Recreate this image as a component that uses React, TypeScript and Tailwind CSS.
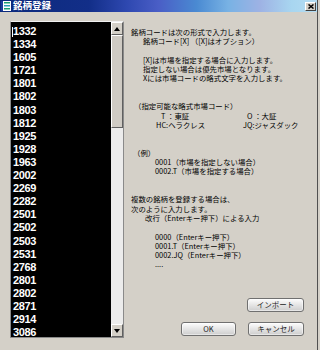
import React from "react";

const items = [
  "1332", "1334", "1605", "1721", "1801", "1802", "1803", "1812", "1925", "1928", "1963", "2002",
  "2269", "2282", "2501", "2502", "2503", "2531", "2768", "2801", "2802", "2871", "2914", "3086",
];

function Line({ children, pl = "" }: { children?: React.ReactNode; pl?: string }) {
  return <div className={`h-[9.3px] whitespace-nowrap ${pl}`}>{children}</div>;
}

function Btn({ label, w }: { label: string; w: string }) {
  return (
    <div
      className={`${w} h-[14px] rounded-[3px] border border-[#707070] bg-linear-to-b from-[#fdfdfd] to-[#cdcdcd] flex items-center justify-center text-[7.5px] text-[#222] shadow-[inset_0_0_0_1px_#ffffff80]`}
    >
      {label}
    </div>
  );
}

function ScrollBtn({ up }: { up: boolean }) {
  return (
    <div className="h-[13px] w-full bg-[#d4d0c8] border-t border-l border-t-white border-l-white border-b border-r border-b-[#606060] border-r-[#606060] flex items-center justify-center">
      <svg width="6" height="4" viewBox="0 0 6 4">
        {up ? <polygon points="3,0 6,4 0,4" fill="#000" /> : <polygon points="0,0 6,0 3,4" fill="#000" />}
      </svg>
    </div>
  );
}

export default function App() {
  return (
    <div className="w-[320px] h-[350px] bg-[#d4d0c8] flex overflow-hidden font-['Noto_Sans_CJK_JP',sans-serif]">
      <div className="w-[318px] h-full flex flex-col border-r border-[#505050]">
        {/* title bar */}
        <div className="h-[12px] flex items-center bg-[linear-gradient(90deg,#0c2a7c_0%,#122e88_28%,#2e48b0_40%,#4a5ec6_50%,#4a8ad2_62%,#78b2e4_72%,#9eb2e4_82%,#a8d6f0_92%,#b4dcf2_100%)]">
          <svg width="10" height="10" viewBox="0 0 10 10" className="ml-[1px]">
            <rect x="0" y="0" width="10" height="10" fill="#ffffff" />
            <rect x="0" y="0" width="2" height="10" fill="#1a3c9a" />
            <rect x="3" y="1" width="6" height="1.5" fill="#1aa070" />
            <rect x="3" y="4" width="6" height="1.5" fill="#2aa0b8" />
            <rect x="3" y="7" width="6" height="1.5" fill="#1aa070" />
          </svg>
          <span className="ml-[2px] text-[9.5px] leading-none font-bold text-white tracking-[0px]">銘柄登録</span>
          <div className="ml-auto mr-[1px] w-[11px] h-[9px] bg-[#d4d0c8] border-t border-l border-t-white border-l-white border-b border-r border-b-[#404040] border-r-[#404040] flex items-center justify-center">
            <svg width="6" height="5" viewBox="0 0 6 5">
              <path d="M0.5 0.5 L5.5 4.5 M5.5 0.5 L0.5 4.5" stroke="#000" strokeWidth="1.5" />
            </svg>
          </div>
        </div>

        {/* body */}
        <div className="flex flex-1">
          {/* list */}
          <div className="ml-[10px] mt-[9px] w-[114px] h-[317px] border border-[#8a8a8a] border-t-[#f0f0f0] flex">
            <div className="flex-1 bg-black pt-[3px] pl-[1px] font-['Liberation_Sans',sans-serif] text-white font-bold text-[11px] leading-[13.1px] tracking-[-0.4px]">
              {items.map((it, i) => (
                <div key={it} className="flex items-center h-[13.1px]">
                  {i === 0 ? <span className="w-[1px] h-[10px] bg-white mr-[0px]" /> : null}
                  <span className={i === 0 ? "" : "pl-[1px]"}>{it}</span>
                </div>
              ))}
            </div>
            <div className="w-[12px] flex flex-col bg-[#ececec]">
              <ScrollBtn up />
              <div className="h-[93px] bg-[#cfcbc4] border-t border-l border-t-white border-l-white border-b border-r border-b-[#606060] border-r-[#606060]" />
              <div className="flex-1 bg-[#ececec]" />
              <ScrollBtn up={false} />
            </div>
          </div>

          {/* right column */}
          <div className="ml-[7px] flex-1 flex flex-col pt-[15px] text-[7.4px] leading-[9.3px] text-black">
            <Line>銘柄コードは次の形式で入力します。</Line>
            <Line pl="pl-[12px]">銘柄コード[X] （[X]はオプション）</Line>
            <Line />
            <Line pl="pl-[12px]">[X]は市場を指定する場合に入力します。</Line>
            <Line pl="pl-[12px]">指定しない場合は優先市場となります。</Line>
            <Line pl="pl-[12px]">Xには市場コードの略式文字を入力します。</Line>
            <Line />
            <Line />
            <Line pl="pl-[3px]">（指定可能な略式市場コード）</Line>
            <div className="h-[9.3px] whitespace-nowrap flex">
              <span className="pl-[30px] w-[116px]">T ：東証</span>
              <span>O ：大証</span>
            </div>
            <div className="h-[9.3px] whitespace-nowrap flex">
              <span className="pl-[25px] w-[112px]">HC:ヘラクレス</span>
              <span>JQ:ジャスダック</span>
            </div>
            <Line />
            <Line />
            <Line pl="pl-[2px]">（例）</Line>
            <Line pl="pl-[24px]">0001（市場を指定しない場合）</Line>
            <Line pl="pl-[24px]">0002.T（市場を指定する場合）</Line>
            <Line />
            <Line />
            <Line>複数の銘柄を登録する場合は、</Line>
            <Line>次のように入力します。</Line>
            <Line pl="pl-[14px]">改行（Enterキー押下）による入力</Line>
            <Line />
            <Line pl="pl-[24px]">0000（Enterキー押下）</Line>
            <Line pl="pl-[24px]">0001.T（Enterキー押下）</Line>
            <Line pl="pl-[24px]">0002.JQ（Enterキー押下）</Line>
            <Line pl="pl-[24px]">....</Line>

            <div className="mt-[29px] flex justify-end pr-[13px]">
              <Btn label="インポート" w="w-[57px]" />
            </div>
            <div className="mt-[10px] flex justify-end gap-[12px] pr-[13px]">
              <Btn label="OK" w="w-[55px]" />
              <Btn label="キャンセル" w="w-[56px]" />
            </div>
          </div>
        </div>
      </div>
    </div>
  );
}
